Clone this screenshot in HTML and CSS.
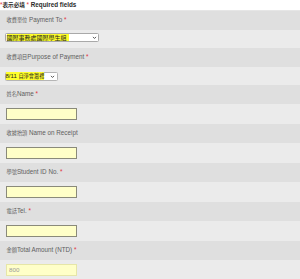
FILE: index.html
```html
<!DOCTYPE html>
<html lang="zh-Hant">
<head>
<meta charset="utf-8">
<link rel="stylesheet" href="styles.css">
</head>
<body>
<div class="form">
  <div class="note"><span class="req">*</span><b class="cjk">表示必填</b> <span class="req">*</span> <b>Required fields</b></div>

  <div class="label"><span class="cjk">收費單位</span> Payment To <span class="req">*</span></div>
  <div class="field sel1">
    <div class="select wide"><mark class="cjk">國際事務處國際學生組</mark><svg class="chev" viewBox="0 0 8 8" width="5" height="5"><path d="M1.5 3 L4 5.5 L6.5 3" fill="none" stroke="#333" stroke-width="1.3"/></svg></div>
  </div>

  <div class="label"><span class="cjk">收費項目</span>Purpose of Payment <span class="req">*</span></div>
  <div class="field sel2">
    <div class="select narrow"><mark><span>8/11 </span><span class="cjk">自淨會籌禮</span></mark><svg class="chev" viewBox="0 0 8 8" width="5" height="5"><path d="M1.5 3 L4 5.5 L6.5 3" fill="none" stroke="#333" stroke-width="1.3"/></svg></div>
  </div>

  <div class="label"><span class="cjk">姓名</span>Name <span class="req">*</span></div>
  <div class="field text"><input class="box" type="text"></div>

  <div class="label"><span class="cjk">收據抬頭</span> Name on Receipt</div>
  <div class="field text"><input class="box" type="text"></div>

  <div class="label"><span class="cjk">學號</span>Student ID No. <span class="req">*</span></div>
  <div class="field text"><input class="box" type="text"></div>

  <div class="label"><span class="cjk">電話</span>Tel. <span class="req">*</span></div>
  <div class="field text"><input class="box" type="text"></div>

  <div class="label"><span class="cjk">金額</span>Total Amount (NTD) <span class="req">*</span></div>
  <div class="field text"><input class="box ro" type="text" value="800" readonly></div>
</div>
</body>
</html>
```

FILE: styles.css
```css
html, body {
  margin: 0;
  padding: 0;
  background: #ffffff;
}
body {
  font-family: "Liberation Sans", Arial, "Noto Sans CJK TC", sans-serif;
  font-size: 6.3px;
  color: #5e5e5e;
  overflow: hidden;
}
.cjk {
  font-family: "Noto Sans CJK TC", sans-serif;
  font-size: 5.2px;
}
.form {
  display: flex;
  flex-direction: column;
}
.note {
  height: 10px;
  line-height: 10px;
  border-bottom: 1px solid #e6e6e6;
  white-space: nowrap;
  color: #2a2a2a;
}
.note b {
  font-weight: 700;
}
.note .cjk {
  font-size: 5.6px;
}
.req {
  color: #e0303a;
}
.label {
  height: 18.5px;
  line-height: 18.5px;
  background: #dfdfdf;
  padding-left: 6.5px;
  white-space: nowrap;
}
.field {
  background: #ebebeb;
  display: flex;
  align-items: center;
  padding-left: 4.5px;
}
.sel1 {
  height: 18.5px;
  align-items: flex-start;
  padding-top: 3.3px;
  box-sizing: border-box;
}
.sel2 {
  height: 18.5px;
  align-items: flex-start;
  padding-top: 5.7px;
  box-sizing: border-box;
}
.text {
  height: 20.5px;
  padding-left: 6px;
}
.select {
  display: flex;
  align-items: center;
  height: 9.5px;
  box-sizing: border-box;
  border: 1px solid #a9a9a9;
  border-radius: 1.5px;
  background: #fff;
  padding-left: 1px;
}
.select.wide {
  width: 94.5px;
}
.select.narrow {
  width: 53px;
  height: 8.5px;
  padding-left: 0;
  border-color: #b5b5b5;
}
.select mark {
  background: #ffff2a;
  color: #222;
  line-height: 7px;
  white-space: pre;
  font-size: 6px;
}
.select.wide mark {
  width: 62px;
}
.chev {
  margin-left: auto;
  margin-right: 1.5px;
}
.box {
  width: 71px;
  height: 11.5px;
  box-sizing: border-box;
  margin: 0;
  padding: 0 2px;
  border: 1px solid #8a8a7a;
  background: #ffffc8;
  font-family: "Liberation Sans", Arial, sans-serif;
  font-size: 6.2px;
  color: #999;
  outline: none;
}
.box.ro {
  border-color: #e6e6a8;
  background: #ffffc8;
  color: #9a9a9a;
}
```
